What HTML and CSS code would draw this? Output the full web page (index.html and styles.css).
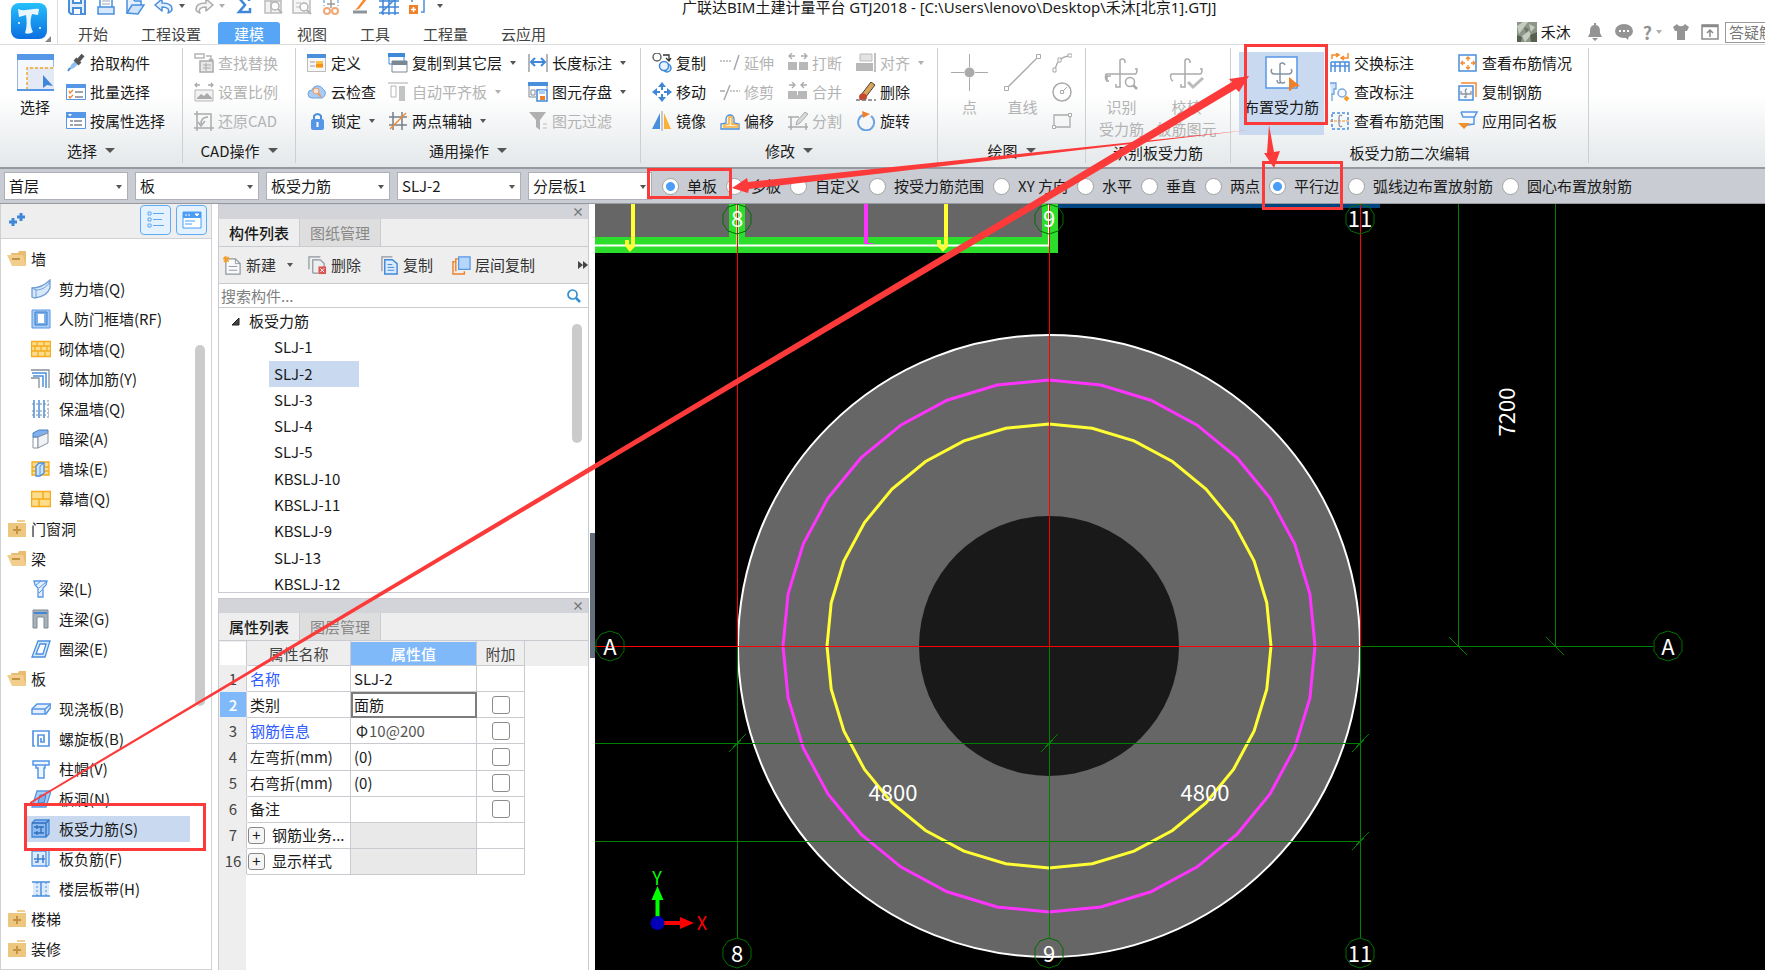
FILE: index.html
```html
<!DOCTYPE html>
<html lang="zh-CN">
<head>
    <meta charset="UTF-8">
    <meta name="viewport" content="width=device-width, initial-scale=1.0">
    <title>广联达BIM土建计量平台 GTJ2018</title>
    <link rel="stylesheet" href="styles.css">
</head>
<body>

<!-- icon sprite -->
<svg class="sprite" aria-hidden="true">
    <!-- quick access -->
    <symbol id="q-save" viewBox="0 0 20 20"><path d="M2 0h16v19H4l-2-2z" fill="#e3effc" stroke="#4a8fdc" stroke-width="2"/><path d="M6 0v8h8V0M6 19v-6h8v6" fill="#fff" stroke="#4a8fdc" stroke-width="2"/></symbol>
    <symbol id="q-new" viewBox="0 0 20 20"><path d="M4 12V1h8l4 4v7" fill="#fff" stroke="#4a8fdc" stroke-width="1.5"/><path d="M6 6h8M6 9h8" stroke="#9aa5b1"/><path d="M2 12h16v7H2z" fill="#d7e8fc" stroke="#4a8fdc" stroke-width="1.5"/></symbol>
    <symbol id="q-open" viewBox="0 0 20 20"><path d="M2 18V4h6l2 2h6v4" fill="#e3effc" stroke="#4a8fdc" stroke-width="1.5"/><path d="M2 18l5-8h12l-6 9z" fill="#cfe3fb" stroke="#4a8fdc" stroke-width="1.5"/></symbol>
    <symbol id="q-undo" viewBox="0 0 20 20"><path d="M1 10l7-6v4c6 0 10 2 10 6 0 2-1 3-4 4 2-4-1-6-6-6v4z" fill="#e3effc" stroke="#4a8fdc" stroke-width="1.5" stroke-linejoin="round"/></symbol>
    <symbol id="q-redo" viewBox="0 0 20 20"><path d="M19 10l-7-6v4C6 8 2 10 2 14c0 2 1 3 4 4-2-4 1-6 6-6v4z" fill="#f4f4f4" stroke="#ababab" stroke-width="1.5" stroke-linejoin="round"/></symbol>
    <symbol id="q-sum" viewBox="0 0 20 20"><path d="M15 6V3H5l6 7-6 7h11v-4" fill="none" stroke="#3f87d9" stroke-width="2.5"/></symbol>
    <symbol id="q-find" viewBox="0 0 20 20"><path d="M2 1h16v17H2zM2 6h16M8 1v17" fill="#f2f2f2" stroke="#bdbdbd" stroke-width="1.5"/><circle cx="12" cy="11" r="4" fill="#fff" stroke="#b3b3b3" stroke-width="1.5"/><path d="M15 14l4 4" stroke="#b3b3b3" stroke-width="2"/></symbol>
    <symbol id="q-view" viewBox="0 0 20 20"><path d="M1 4h17v14H1z" fill="#f6f6f6" stroke="#bdbdbd" stroke-width="1.5"/><path d="M4 8h5M4 12h4" stroke="#bdbdbd"/><circle cx="12" cy="12" r="4" fill="#fff" stroke="#b3b3b3" stroke-width="1.5"/><path d="M15 15l4 4" stroke="#b3b3b3" stroke-width="2"/></symbol>
    <symbol id="q-sheet" viewBox="0 0 20 20"><path d="M3 0v11M17 0v11" stroke="#4a8fdc" stroke-dasharray="3 2"/><path d="M6 9h8M10 5v8" stroke="#9a9a9a" stroke-width="1.5"/><g fill="none" stroke="#f0a878" stroke-width="2"><circle cx="6" cy="16" r="3"/><circle cx="14" cy="16" r="3"/></g></symbol>
    <symbol id="q-pen" viewBox="0 0 20 20"><path d="M7 13L16 1l2 2-9 11-4 1z" fill="#f58a2c"/><path d="M3 17h14" stroke="#8e9499" stroke-width="3"/></symbol>
    <symbol id="q-grid" viewBox="0 0 20 20"><path d="M4 0v20M10 0v20M16 0v20M0 6h20M0 12h20M0 18h20M2 18L18 2" stroke="#3f87d9" stroke-width="1.5"/></symbol>
    <symbol id="q-add" viewBox="0 0 20 20"><path d="M4 7V2h12v15h-3" fill="none" stroke="#4a8fdc" stroke-width="1.5"/><path d="M1 10h9v9H1z" fill="#f0802a"/><path d="M3 14.500h5M5.500 12v5" stroke="#fff" stroke-width="1.500"/></symbol>

    <!-- select group -->
    <symbol id="i-select" viewBox="0 0 37 37"><path d="M.5.5h36v36H.5z" fill="#f5f8fd" stroke="#9db8dc"/><path d="M0 0h37v6H0z" fill="#5596e6"/><path d="M10 13h27v24H10z" fill="#e4eaf5"/><path d="M10 36V14h26" fill="none" stroke="#f5a623" stroke-width="1.500" stroke-dasharray="3 2"/><path d="M26 21v13l4-3 6 1z" fill="#3f87d9"/><path d="M0 36h37" stroke="#5596e6" stroke-width="2"/></symbol>
    <symbol id="i-dropper" viewBox="0 0 20 20"><path d="M3 17l2-5 6-6 3 3-6 6z" fill="#8cc0f2"/><path d="M9 6l5 5M12 8l5-6" stroke="#555" stroke-width="4"/><path d="M2 18l2-3" stroke="#4a8fdc" stroke-width="2"/></symbol>
    <symbol id="i-batch" viewBox="0 0 20 20"><path d="M.5 2.500h19v15H.5z" fill="#fff" stroke="#5596e6"/><path d="M0 2h20v4H0z" fill="#5596e6"/><path d="M3 9l1 2 3-3M3 14l1 2 3-3" fill="none" stroke="#f0802a" stroke-width="1.300"/><path d="M9 10h8M9 15h8" stroke="#7d8791" stroke-width="1.500"/></symbol>
    <symbol id="i-prop" viewBox="0 0 20 20"><path d="M.5 1.500h19v16H.5z" fill="#fff" stroke="#5596e6"/><path d="M0 1h20v6H0z" fill="#5596e6"/><path d="M2 3h4L4 5.500z" fill="#fff"/><path d="M4 10h3M8 10h8M4 14h3M8 14h8" stroke="#7d8791" stroke-width="1.300"/></symbol>

    <!-- cad group -->
    <symbol id="i-replace" viewBox="0 0 20 20"><path d="M1 1h9v4H1zM12 3h5v4M15 6l2 2 2-2" fill="none" stroke="#b5b5b5" stroke-width="1.500"/><path d="M6 8h13v11H6z" fill="#e8e8e8" stroke="#aaa" stroke-width="1.500"/><path d="M9 12h8M9 15h8M12 10v8" stroke="#aaa"/></symbol>
    <symbol id="i-scale" viewBox="0 0 20 20"><path d="M1 3h5M3 1L1 3l2 2M19 3h-5M17 1l2 2-2 2" fill="none" stroke="#aaa" stroke-width="1.300"/><path d="M1 8h18v11H1z" fill="#f3f3f3" stroke="#b5b5b5"/><path d="M3 16l4-4 3 2 3-3 5 5v1H3z" fill="#aaa"/></symbol>
    <symbol id="i-restore" viewBox="0 0 20 20"><path d="M3 0v20M0 3h17v17M0 17h20" fill="none" stroke="#aaa" stroke-width="1.500"/><path d="M7 13c0-5 2-7 7-7M11 10l-4 5-3-4" fill="none" stroke="#aaa" stroke-width="1.500"/></symbol>

    <!-- general group -->
    <symbol id="i-define" viewBox="0 0 20 20"><path d="M.5 1.500h18v17H.5z" fill="#f7f7f7" stroke="#bbb"/><path d="M0 1h19v4H0z" fill="#4a8fdc"/><path d="M3 9h5M3 13h5" stroke="#9a9a9a"/><path d="M9 8h7v7H9z" fill="#fbc04a"/><path d="M9 11h7v3H9z" fill="#f5921e"/></symbol>
    <symbol id="i-cloud" viewBox="0 0 20 20"><path d="M5 16a4 4 0 010-8 6 6 0 0111-1 5 5 0 01-1 9z" fill="#a9cdf5" stroke="#6ba3e2"/><circle cx="9" cy="9" r="3" fill="#fbe3cf" stroke="#e89a62"/><path d="M11 11l3 4" stroke="#e89a62" stroke-width="2"/></symbol>
    <symbol id="i-lock" viewBox="0 0 20 20"><path d="M7 9V5a4 4 0 017 0v4" fill="none" stroke="#4a8fdc" stroke-width="2"/><rect x="4" y="8" width="13" height="11" rx="2" fill="#5596e6"/><path d="M10.500 11v5" stroke="#fff" stroke-width="2"/></symbol>
    <symbol id="i-floors" viewBox="0 0 20 20"><path d="M1 1h15v10H1z" fill="#fff" stroke="#3f87d9"/><path d="M0 0h17v4H0z" fill="#3f87d9"/><path d="M4 8h15v11H4z" fill="#fff" stroke="#7b8794"/><path d="M4 8h15v4H4z" fill="#7b8794"/></symbol>
    <symbol id="i-flush" viewBox="0 0 20 20"><path d="M0 1h20" stroke="#aaa"/><path d="M3 4h5v11H3z" fill="#fff" stroke="#b5b5b5"/><path d="M11 4h6v15h-6z" fill="#c4c4c4"/></symbol>
    <symbol id="i-axis" viewBox="0 0 20 20"><path d="M5 1v18M14 1v18M1 6h18M1 14h18" stroke="#777f87" stroke-width="1.500"/><path d="M2 18L18 2" stroke="#f58a2c" stroke-width="1.500"/></symbol>
    <symbol id="i-length" viewBox="0 0 20 20"><path d="M1 1v18M19 1v18" stroke="#9aa0a6" stroke-width="1.500"/><path d="M3 9h14M7 5L3 9l4 4M13 5l4 4-4 4" fill="none" stroke="#3f87d9" stroke-width="2"/></symbol>
    <symbol id="i-store" viewBox="0 0 20 20"><path d="M1 4v11h7M19 4v3" fill="none" stroke="#7d8791"/><path d="M0 0h20v4H0z" fill="#4a8fdc"/><path d="M3 8h4v5H3z" fill="none" stroke="#7d8791"/><path d="M9 8h10v11H9z" fill="#fff" stroke="#3f87d9" stroke-width="1.500"/><path d="M11 8h6v4h-6z" fill="#a9cdf5"/><path d="M12 14h5v4h-5z" fill="#f0802a"/></symbol>
    <symbol id="i-filter" viewBox="0 0 20 20"><path d="M1 1h17l-6 8v10l-4-3V9z" fill="#b0b0b0"/><path d="M15 13h4M15 17h4" stroke="#bbb"/></symbol>

    <!-- modify group -->
    <symbol id="i-copy" viewBox="0 0 20 20"><circle cx="5" cy="4" r="4" fill="#fff" stroke="#666" stroke-width="1.500"/><path d="M11 2h6v5M14 5l3 3 2-3" fill="none" stroke="#333" stroke-width="1.300"/><circle cx="15" cy="15" r="4" fill="#cfe3fb" stroke="#3f87d9" stroke-width="1.500"/><circle cx="12" cy="13" r="4.500" fill="#e8f2fd" stroke="#3f87d9" stroke-width="1.500"/></symbol>
    <symbol id="i-move" viewBox="0 0 20 20"><path d="M10 0l4 5h-3v3H9V5H6zM10 20l4-5h-3v-3H9v3H6zM0 10l5-4v3h3v2H5v3zM20 10l-5-4v3h-3v2h3v3z" fill="#3f87d9"/></symbol>
    <symbol id="i-mirror" viewBox="0 0 20 20"><path d="M8 2v16H0z" fill="#4a8fdc"/><path d="M12 2v16h7z" fill="#fbb03b"/><path d="M10 0v20" stroke="#9a9a9a"/></symbol>
    <symbol id="i-extend" viewBox="0 0 20 20"><path d="M0 8h12" stroke="#b5b5b5" stroke-width="1.500" stroke-dasharray="2 1"/><path d="M19 2l-5 15" stroke="#aaa" stroke-width="1.500"/></symbol>
    <symbol id="i-trim" viewBox="0 0 20 20"><path d="M0 9h5" stroke="#aaa" stroke-width="1.500"/><path d="M10 9h10" stroke="#b5b5b5" stroke-width="1.500" stroke-dasharray="2 1"/><path d="M10 3L4 18" stroke="#aaa" stroke-width="1.500"/></symbol>
    <symbol id="i-offset" viewBox="0 0 20 20"><path d="M1 18v-5l5-1V8a4 4 0 018 0v4l5 1v5z" fill="#fdf1d6" stroke="#4a8fdc" stroke-width="1.300"/><path d="M4 16v-2l5-1V6h3v7l6 1v2z" fill="none" stroke="#f5b041" stroke-width="1.500"/></symbol>
    <symbol id="i-break" viewBox="0 0 20 20"><path d="M1 3h6M4 0L1 3l3 3M19 3h-6M16 0l3 3-3 3" fill="none" stroke="#aaa" stroke-width="1.300"/><path d="M0 9h9v8H0zM11 9h9v8h-9z" fill="#b8b8b8"/></symbol>
    <symbol id="i-merge" viewBox="0 0 20 20"><path d="M1 3h6M4 0l3 3-3 3M19 3h-6M16 0l-3 3 3 3" fill="none" stroke="#aaa" stroke-width="1.300"/><path d="M0 9h19v8H0z" fill="#b8b8b8"/><path d="M9.500 9v4" stroke="#fff"/></symbol>
    <symbol id="i-split" viewBox="0 0 20 20"><path d="M3 6v13M18 12v7M0 6h11M0 16h20" fill="none" stroke="#aaa" stroke-width="1.500"/><path d="M8 14l1-4 8-9 3 2-8 9z" fill="#d9d9d9" stroke="#aaa"/></symbol>
    <symbol id="i-align" viewBox="0 0 20 20"><path d="M4 1h12v7H4z" fill="#e3e3e3" stroke="#bbb"/><path d="M0 10h17v8H0z" fill="#b8b8b8"/><path d="M19 0v19" stroke="#aaa" stroke-width="1.500"/></symbol>
    <symbol id="i-erase" viewBox="0 0 20 20"><path d="M5 13L15 0l4 3L9 16z" fill="#d9a45b" stroke="#4a3c2c"/><ellipse cx="7" cy="15" rx="4" ry="3.500" fill="#c8452e"/><path d="M0 18h20" stroke="#777" stroke-width="1.500" stroke-dasharray="4 2"/></symbol>
    <symbol id="i-rotate" viewBox="0 0 20 20"><path d="M7 4a8 8 0 108 1" fill="none" stroke="#6ba3e2" stroke-width="2"/><path d="M6 0l8 3-7 4z" fill="#f0802a"/></symbol>

    <!-- draw group -->
    <symbol id="i-point" viewBox="0 0 37 37"><path d="M18.500 0v13M18.500 24v13M0 18.500h13M24 18.500h13" stroke="#aaa"/><circle cx="18.500" cy="18.500" r="5" fill="#aaa"/></symbol>
    <symbol id="i-line" viewBox="0 0 37 37"><path d="M3 34L34 3" stroke="#aaa" stroke-width="1.300"/><path d="M.500 32.500h4v4h-4zM32.500.500h4v4h-4z" fill="#fff" stroke="#aaa"/></symbol>
    <symbol id="i-arc" viewBox="0 0 20 20"><path d="M3 16C5 8 9 4 16 3" fill="none" stroke="#aaa" stroke-width="1.300"/><path d="M1 15h3v4H1zM6 5h3v4H6zM16 1h4v3h-4z" fill="#fff" stroke="#aaa"/></symbol>
    <symbol id="i-circle" viewBox="0 0 20 20"><circle cx="10" cy="10" r="9" fill="none" stroke="#aaa" stroke-width="1.500"/><path d="M11 9l4-4M8.500 8.500h3v3h-3z" fill="none" stroke="#aaa"/></symbol>
    <symbol id="i-rect" viewBox="0 0 20 20"><path d="M2 4h16v12H2z" fill="none" stroke="#aaa" stroke-width="1.300"/><path d="M.500 14.500h3v3h-3zM16.500 2.500h3v3h-3z" fill="#fff" stroke="#aaa"/></symbol>

    <!-- rebar icons -->
    <symbol id="i-identify" viewBox="0 0 37 37"><g fill="none" stroke="#aaa" stroke-width="1.500"><path d="M22 9V7a3 3 0 00-5-1v27h-4v-3M6 27H4v-5h4M3 20h29c2 0 2-2 2-5h-2M3 20c-1 3 0 6 1 7"/><circle cx="27" cy="28" r="4.500"/><path d="M30 31l4 4" stroke-width="2.500"/></g></symbol>
    <symbol id="i-check" viewBox="0 0 37 37"><g fill="none" stroke="#aaa" stroke-width="1.500"><path d="M22 9V7a3 3 0 00-5-1v27h-4v-3M3 20h29c2 0 2-2 2-5h-2M3 20c-1 3 0 6 2 7"/><path d="M20 28l5 5 10-9" stroke="#bbb" stroke-width="3"/></g></symbol>
    <symbol id="i-place" viewBox="0 0 37 37"><path d="M3 3h31v31H3z" fill="#fff" stroke="#5596e6" stroke-width="1.500"/><g fill="none" stroke="#8494a5" stroke-width="1.500"><path d="M22 11a3 3 0 00-5-1v17a3 3 0 005 1M9 15a3 3 0 002 5h15a3 3 0 002-5M14 26c0 3 2 4 4 2"/></g><path d="M26 23l11 9-6 1-5 5z" fill="#f0802a"/></symbol>
    <symbol id="i-swap" viewBox="0 0 20 20"><path d="M2 6V2h6M6 0l3 2-3 2M18 0v5h-6M14 3l-3 2 3 2" fill="none" stroke="#f58a2c" stroke-width="1.500"/><path d="M1 9h18v10M1 9v10M1 13h18M5 9v10M10 9v10M15 9v10" fill="none" stroke="#4a8fdc" stroke-width="1.500"/></symbol>
    <symbol id="i-edit" viewBox="0 0 20 20"><path d="M0 1h6v6H4v5H2v7" fill="#cfe3fb" stroke="#6ba3e2" stroke-width="1.300"/><circle cx="12" cy="11" r="4" fill="#f5f9fe" stroke="#7aa9dc" stroke-width="1.500"/><path d="M15 15l3 3" stroke="#f59a23" stroke-width="4"/></symbol>
    <symbol id="i-range" viewBox="0 0 20 20"><path d="M2 2h16v16H2z" fill="none" stroke="#4a8fdc" stroke-width="1.500" stroke-dasharray="3 2"/><path d="M0 10h20" stroke="#f58a2c" stroke-dasharray="3 1"/><path d="M12 5c-2-2-3 0-3 2v6c0 3 2 3 3 2" fill="none" stroke="#8a949e" stroke-width="1.300"/></symbol>
    <symbol id="i-status" viewBox="0 0 20 20"><path d="M1 2h17v16H1z" fill="#fff" stroke="#4a8fdc" stroke-width="1.500"/><path d="M10 4v4M8 6l2-2 2 2M10 16v-4M8 14l2 2 2-2M3 10h4M5 8l-2 2 2 2M17 10h-4M15 8l2 2-2 2" fill="none" stroke="#f58a2c" stroke-width="1.300"/></symbol>
    <symbol id="i-rebar" viewBox="0 0 20 20"><path d="M3 1h15v14" fill="none" stroke="#f58a2c" stroke-width="1.500"/><path d="M1 4h14v14H1z" fill="#f5f9fe" stroke="#4a8fdc" stroke-width="1.500"/><path d="M9 7c-2 0-2 2-1 4v5M3 9v3h10v-3M6 15h2" fill="none" stroke="#8a949e" stroke-width="1.300"/></symbol>
    <symbol id="i-apply" viewBox="0 0 20 20"><path d="M3 1h16l-3 6v6l-7 1M3 1l2 5h11" fill="#f5f9fe" stroke="#5596e6" stroke-width="1.500"/><path d="M0 12h12l-6 6z" fill="#f0902a"/></symbol>

    <!-- component tree -->
    <symbol id="f-open" viewBox="0 0 20 20"><path d="M4 4l7 0 1-2h7v14H6z" fill="#e9bd6f"/><path d="M0 6h16l3 11H5z" fill="#f1ce8d"/><path d="M5 10h8" stroke="#c39343" stroke-width="2"/></symbol>
    <symbol id="f-shut" viewBox="0 0 20 20"><path d="M10 1h8v2h-8z" fill="#f1ce8d"/><path d="M1 4h18v14H1z" fill="#edc67f"/><path d="M6 11h8M10 7v8" stroke="#c39343" stroke-width="2"/></symbol>
    <symbol id="t-wall" viewBox="0 0 20 20"><path d="M1 9c8 0 13-3 18-8v8c-2 6-8 9-15 10l-3-1z" fill="#d7e8fc" stroke="#6f9fd4" stroke-width="1.300"/><path d="M1 9l4 2v8M5 11c7 0 12-4 14-9" fill="none" stroke="#6f9fd4"/></symbol>
    <symbol id="t-frame" viewBox="0 0 20 20"><path d="M1 1h18v18H1z" fill="#a9cdf5" stroke="#5596e6"/><path d="M4 3h12v13H4z" fill="#7fb1ee" stroke="#3f7fcb"/><path d="M7 5h6v9H7z" fill="#fff"/></symbol>
    <symbol id="t-brick" viewBox="0 0 20 20"><path d="M0 2h20v16H0z" fill="#fddc8c"/><path d="M.500 2.500h19v15H.500zM0 7h20M0 12h20M6 2v5M13 2v5M4 7v5M10 7v5M16 7v5M7 12v6M14 12v6" fill="none" stroke="#f5ab1b" stroke-width="1.300"/></symbol>
    <symbol id="t-brickbar" viewBox="0 0 20 20"><path d="M0 1h18v18M0 9h8v10" fill="none" stroke="#888f96" stroke-width="1.300"/><path d="M1 4h14v15M2 7h10v11" fill="none" stroke="#4a8fdc" stroke-width="1.500"/></symbol>
    <symbol id="t-insul" viewBox="0 0 20 20"><path d="M3 1v18M8 1v18M13 1v18" stroke="#4a8fdc" stroke-width="1.500"/><path d="M17 1v18M1 5h17M1 12h17M1 16h17" stroke="#7b8a99" stroke-dasharray="2 2"/></symbol>
    <symbol id="t-hidden" viewBox="0 0 20 20"><path d="M2 8h5v11H2z" fill="#fff" stroke="#8a949e"/><path d="M2 8V4l6-3h9v3l-10 4z" fill="#7fb1ee" stroke="#4a7fbe"/><path d="M7 8l10-4v10l-10 5z" fill="#f0f3f6" stroke="#8a949e"/></symbol>
    <symbol id="t-pier" viewBox="0 0 20 20"><path d="M1 3h17v13H1zM1 8h17M1 12h17" fill="#fddc8c" stroke="#f5ab1b" stroke-width="1.300"/><path d="M5 7l3-3h5v10l-4 3H5z" fill="#cfe3fb" stroke="#4a8fdc" stroke-width="1.300"/><path d="M9 7v9M9 7l4-3" stroke="#4a8fdc"/></symbol>
    <symbol id="t-curtain" viewBox="0 0 20 20"><path d="M0 2h20v16H0z" fill="#fddc8c"/><path d="M.500 2.500h19v15H.500zM0 10h20M12 2v8M8 10v8" fill="none" stroke="#f5ab1b" stroke-width="1.500"/></symbol>
    <symbol id="t-beam" viewBox="0 0 20 20"><path d="M3 2h13l-1 4-3 3v9H7V9L4 6z" fill="#e3effc" stroke="#5596e6" stroke-width="1.300"/><path d="M5 6l5-4M8 9l7-6M8 14l4-4" stroke="#5596e6"/></symbol>
    <symbol id="t-link" viewBox="0 0 20 20"><path d="M2 1h15v18h-4V8H6v11H2z" fill="#a7b1ba" stroke="#7f8a94"/><path d="M3 4h13" stroke="#3f87d9" stroke-width="2"/></symbol>
    <symbol id="t-ring" viewBox="0 0 20 20"><path d="M7 2h12l-5 16H1zM9 5h6l-3 10H5z" fill="#d7e8fc" fill-rule="evenodd" stroke="#4a8fdc" stroke-width="1.300"/></symbol>
    <symbol id="t-slab" viewBox="0 0 20 20"><path d="M1 10l5-5h14v3l-5 7H1z" fill="#e3effc" stroke="#5596e6" stroke-width="1.500"/><path d="M1 10h13l6-5M14 10v5" fill="none" stroke="#5596e6" stroke-width="1.500"/></symbol>
    <symbol id="t-spiral" viewBox="0 0 20 20"><path d="M4 17H2V2h16v15H7V6h6v7h-3V9" fill="none" stroke="#5596e6" stroke-width="1.700"/></symbol>
    <symbol id="t-cap" viewBox="0 0 20 20"><path d="M2 2h16v4H2zM5 6h9v3h-1v10H7V9H5z" fill="#eef5fd" stroke="#5596e6" stroke-width="1.500"/></symbol>
    <symbol id="t-hole" viewBox="0 0 20 20"><path d="M6 2h14l-5 16H1z" fill="#a9cdf5" stroke="#5596e6" stroke-width="1.300"/><path d="M9 6h6l-2 8H7z" fill="#7fb1ee" stroke="#3f7fcb"/></symbol>
    <symbol id="t-force" viewBox="0 0 20 20"><path d="M1 4l3-3h14v14l-3 3H1z" fill="#8dbaf0" stroke="#3f87d9" stroke-width="1.300"/><path d="M1 4h14v14M15 4l3-3M3 8h10M3 14h10M6 6v4M10 8v6M6 12v4" fill="none" stroke="#2f6fbb" stroke-width="1.300"/></symbol>
    <symbol id="t-neg" viewBox="0 0 20 20"><path d="M1 2h14v15H1zM15 2l3-1v15l-3 2" fill="#dcebfc" stroke="#5596e6" stroke-width="1.300"/><path d="M7 5v8H4M12 6v8M3 10h11" fill="none" stroke="#3f7fcb" stroke-width="1.500"/></symbol>
    <symbol id="t-band" viewBox="0 0 20 20"><path d="M2 3h16v14H2z" fill="#dcebfc"/><path d="M1 3h18M1 17h18M10 3v14" stroke="#4a8fdc" stroke-width="1.500"/><path d="M6 3v14M15 3v14" stroke="#4a8fdc" stroke-dasharray="2 2"/></symbol>

    <!-- list toolbar -->
    <symbol id="l-new" viewBox="0 0 20 20"><path d="M3 3h10l5 5v11H3z" fill="#fafafa" stroke="#8e979f" stroke-width="1.300"/><path d="M13 3v5h5M6 11h9M6 15h9" fill="none" stroke="#8e979f"/><path d="M3 0v7M0 3h7M1 1l5 5M6 1L1 6" stroke="#f59a23" stroke-width="1.500"/></symbol>
    <symbol id="l-del" viewBox="0 0 20 20"><path d="M1 14V1h12M5 18V4h8l4 4v4M5 18h6" fill="none" stroke="#8e979f" stroke-width="1.300"/><path d="M11 11h8v8h-8z" fill="#d9534f"/><path d="M13 13l4 4M17 13l-4 4" stroke="#fff"/></symbol>
    <symbol id="l-copy" viewBox="0 0 20 20"><path d="M2 16V1h11" fill="none" stroke="#8e979f" stroke-width="1.300"/><path d="M5 4h8l5 4v11H5z" fill="#dcebfc" stroke="#3f87d9" stroke-width="1.500"/><path d="M8 9h5M8 12h7M8 15h7" stroke="#3f87d9"/></symbol>
    <symbol id="l-layer" viewBox="0 0 20 20"><path d="M3 6H1v13h12v-3M7 3H4v13" fill="none" stroke="#f0802a" stroke-width="1.500"/><path d="M7 1h12v13H7z" fill="#b5d6fb" stroke="#5596e6" stroke-width="1.300"/></symbol>
</svg>

<div class="app">
    <header class="titlebar">
        <div class="logo">
            <svg viewBox="0 0 36 36" width="36" height="36">
                <defs><linearGradient id="logoFill" x1="0" y1="0" x2="0" y2="1"><stop offset="0" stop-color="#25c0fb"/><stop offset="1" stop-color="#0b6fe0"/></linearGradient></defs>
                <rect width="36" height="36" rx="8" fill="url(#logoFill)"/>
                <path d="M7 6c7 3 14-1 21 0l-1 6-6-1c-2 6-2 12 1 18-3 2-6 2-8 1 2-6 2-12 1-18l-7 2z" fill="#eaf6ff"/>
                <circle cx="29" cy="25" r="1" fill="#fff"/><circle cx="8" cy="20" r="1" fill="#fff"/>
            </svg>
        </div>
        <div class="title-main">
            <div class="title-row">
                <div class="quick">
                    <svg class="icon"><use href="#q-save"/></svg>
                    <svg class="icon"><use href="#q-new"/></svg>
                    <svg class="icon"><use href="#q-open"/></svg>
                    <svg class="icon"><use href="#q-undo"/></svg>
                    <i class="caret"></i>
                    <svg class="icon"><use href="#q-redo"/></svg>
                    <i class="caret dim"></i>
                    <svg class="icon"><use href="#q-sum"/></svg>
                    <svg class="icon"><use href="#q-find"/></svg>
                    <svg class="icon"><use href="#q-view"/></svg>
                    <svg class="icon"><use href="#q-sheet"/></svg>
                    <svg class="icon"><use href="#q-pen"/></svg>
                    <svg class="icon"><use href="#q-grid"/></svg>
                    <svg class="icon"><use href="#q-add"/></svg>
                    <i class="caret more"></i>
                </div>
                <h1 class="title">广联达BIM土建计量平台 GTJ2018 - [C:\Users\lenovo\Desktop\禾沐[北京1].GTJ]</h1>
            </div>
            <div class="tab-row">
                <nav class="tabs">
                    <button>开始</button>
                    <button>工程设置</button>
                    <button class="active">建模</button>
                    <button>视图</button>
                    <button>工具</button>
                    <button>工程量</button>
                    <button>云应用</button>
                </nav>
                <div class="user">
                    <svg width="20" height="20" viewBox="0 0 20 20"><path d="M0 0h20v20H0z" fill="#8d9488"/><path d="M0 4l6-4h5L2 12zM12 2l6 3-4 5zM5 14l7-5 2 4-6 7z" fill="#c5cbbf"/><path d="M0 13l5 2-1 5H0zM13 13l7-3v10h-6z" fill="#55604f"/><path d="M7 5l5 2-3 4z" fill="#6d7668"/></svg>
                    <span class="user-name">禾沐</span>
                    <svg class="u-bell" width="16" height="18" viewBox="0 0 16 18"><path d="M7 0h2v2c4 1 4 4 4 8l2 4H1l2-4c0-4 0-7 4-8zM5 15h6l-3 3z" fill="#949494"/></svg>
                    <svg class="u-chat" width="18" height="16" viewBox="0 0 18 16"><ellipse cx="9" cy="7" rx="9" ry="7" fill="#949494"/><path d="M9 12l5-1-1 5z" fill="#949494"/><path d="M4 7h2M8 7h2M12 7h2" stroke="#fff" stroke-width="2"/></svg>
                    <span class="u-help">?</span><i class="caret dim"></i>
                    <svg class="u-shirt" width="16" height="16" viewBox="0 0 16 16"><path d="M4 0c2 3 6 3 8 0l4 3-2 4h-2v9H4V7H2L0 3z" fill="#949494"/></svg>
                    <svg class="u-box" width="18" height="16" viewBox="0 0 18 16"><path d="M1 1h16v14H1z" fill="#fff" stroke="#8a8a8a" stroke-width="1.500"/><path d="M1 2h16" stroke="#8a8a8a" stroke-width="2.500"/><path d="M9 13V7M6 9l3-3 3 3" fill="none" stroke="#8a8a8a" stroke-width="1.500"/></svg>
                    <input class="ask" type="text" aria-label="答疑解惑" placeholder="答疑解惑">
                </div>
            </div>
        </div>
    </header>

    <section class="ribbon">
        <div class="group g-select">
            <div class="group-body">
                <button class="big"><svg><use href="#i-select"/></svg>选择</button>
                <div class="col">
                    <button><svg class="icon"><use href="#i-dropper"/></svg>拾取构件</button>
                    <button><svg class="icon"><use href="#i-batch"/></svg>批量选择</button>
                    <button><svg class="icon"><use href="#i-prop"/></svg>按属性选择</button>
                </div>
            </div>
            <div class="group-label">选择<i class="caret wide"></i></div>
        </div>
        <div class="group g-cad">
            <div class="group-body">
                <div class="col">
                    <button disabled><svg class="icon"><use href="#i-replace"/></svg>查找替换</button>
                    <button disabled><svg class="icon"><use href="#i-scale"/></svg>设置比例</button>
                    <button disabled><svg class="icon"><use href="#i-restore"/></svg>还原CAD</button>
                </div>
            </div>
            <div class="group-label">CAD操作<i class="caret wide"></i></div>
        </div>
        <div class="group g-general">
            <div class="group-body">
                <div class="col">
                    <button><svg class="icon"><use href="#i-define"/></svg>定义</button>
                    <button><svg class="icon"><use href="#i-cloud"/></svg>云检查</button>
                    <button><svg class="icon"><use href="#i-lock"/></svg>锁定<i class="caret"></i></button>
                </div>
                <div class="col">
                    <button><svg class="icon"><use href="#i-floors"/></svg>复制到其它层<i class="caret"></i></button>
                    <button disabled><svg class="icon"><use href="#i-flush"/></svg>自动平齐板<i class="caret dim"></i></button>
                    <button><svg class="icon"><use href="#i-axis"/></svg>两点辅轴<i class="caret"></i></button>
                </div>
                <div class="col">
                    <button><svg class="icon"><use href="#i-length"/></svg>长度标注<i class="caret"></i></button>
                    <button><svg class="icon"><use href="#i-store"/></svg>图元存盘<i class="caret"></i></button>
                    <button disabled><svg class="icon"><use href="#i-filter"/></svg>图元过滤</button>
                </div>
            </div>
            <div class="group-label">通用操作<i class="caret wide"></i></div>
        </div>
        <div class="group g-modify">
            <div class="group-body">
                <div class="col">
                    <button><svg class="icon"><use href="#i-copy"/></svg>复制</button>
                    <button><svg class="icon"><use href="#i-move"/></svg>移动</button>
                    <button><svg class="icon"><use href="#i-mirror"/></svg>镜像</button>
                </div>
                <div class="col">
                    <button disabled><svg class="icon"><use href="#i-extend"/></svg>延伸</button>
                    <button disabled><svg class="icon"><use href="#i-trim"/></svg>修剪</button>
                    <button><svg class="icon"><use href="#i-offset"/></svg>偏移</button>
                </div>
                <div class="col">
                    <button disabled><svg class="icon"><use href="#i-break"/></svg>打断</button>
                    <button disabled><svg class="icon"><use href="#i-merge"/></svg>合并</button>
                    <button disabled><svg class="icon"><use href="#i-split"/></svg>分割</button>
                </div>
                <div class="col">
                    <button disabled><svg class="icon"><use href="#i-align"/></svg>对齐<i class="caret dim"></i></button>
                    <button><svg class="icon"><use href="#i-erase"/></svg>删除</button>
                    <button><svg class="icon"><use href="#i-rotate"/></svg>旋转</button>
                </div>
            </div>
            <div class="group-label">修改<i class="caret wide"></i></div>
        </div>
        <div class="group g-draw">
            <div class="group-body">
                <button class="big" disabled><svg><use href="#i-point"/></svg>点</button>
                <button class="big" disabled><svg><use href="#i-line"/></svg>直线</button>
                <div class="col">
                    <button disabled aria-label="弧"><svg class="icon"><use href="#i-arc"/></svg></button>
                    <button disabled aria-label="圆"><svg class="icon"><use href="#i-circle"/></svg></button>
                    <button disabled aria-label="矩形"><svg class="icon"><use href="#i-rect"/></svg></button>
                </div>
            </div>
            <div class="group-label">绘图<i class="caret wide"></i></div>
        </div>
        <div class="group g-identify">
            <div class="group-body">
                <button class="big" disabled><svg><use href="#i-identify"/></svg>识别<br>受力筋</button>
                <button class="big" disabled><svg><use href="#i-check"/></svg>校核<br>板筋图元</button>
            </div>
            <div class="group-label low">识别板受力筋</div>
        </div>
        <div class="group g-rebar">
            <div class="group-body">
                <button class="big active"><svg><use href="#i-place"/></svg>布置受力筋</button>
                <div class="col">
                    <button><svg class="icon"><use href="#i-swap"/></svg>交换标注</button>
                    <button><svg class="icon"><use href="#i-edit"/></svg>查改标注</button>
                    <button><svg class="icon"><use href="#i-range"/></svg>查看布筋范围</button>
                </div>
                <div class="col">
                    <button><svg class="icon"><use href="#i-status"/></svg>查看布筋情况</button>
                    <button><svg class="icon"><use href="#i-rebar"/></svg>复制钢筋</button>
                    <button><svg class="icon"><use href="#i-apply"/></svg>应用同名板</button>
                </div>
            </div>
            <div class="group-label low">板受力筋二次编辑</div>
        </div>
    </section>

    <section class="options">
        <div class="combo"><select aria-label="楼层"><option>首层</option></select></div>
        <div class="combo"><select aria-label="构件大类"><option>板</option></select></div>
        <div class="combo"><select aria-label="构件类型"><option>板受力筋</option></select></div>
        <div class="combo"><select aria-label="构件"><option>SLJ-2</option></select></div>
        <div class="combo"><select aria-label="分层"><option>分层板1</option></select></div>
        <div class="radios">
            <label><input type="radio" name="range" checked>单板</label>
            <label><input type="radio" name="range">多板</label>
            <label><input type="radio" name="range">自定义</label>
            <label><input type="radio" name="range">按受力筋范围</label>
            <label><input type="radio" name="dir">XY 方向</label>
            <label><input type="radio" name="dir">水平</label>
            <label><input type="radio" name="dir">垂直</label>
            <label><input type="radio" name="dir">两点</label>
            <label><input type="radio" name="dir" checked>平行边</label>
            <label><input type="radio" name="dir">弧线边布置放射筋</label>
            <label><input type="radio" name="dir">圆心布置放射筋</label>
        </div>
    </section>

    <main class="workspace">
        <aside class="nav">
            <div class="nav-tools">
                <svg width="18" height="16" viewBox="0 0 18 16"><path d="M1 10h8M5 6v8M9 5h8M13 1v8" stroke="#3f87d9" stroke-width="3"/></svg>
                <button aria-label="列表"><svg width="18" height="18" viewBox="0 0 18 18"><path d="M1 1h3v3H1zM1 7h3v3H1zM1 13h3v3H1zM6 2.500h11M6 8.500h9M6 14.500h11" fill="none" stroke="#5fa8f5"/></svg></button>
                <button aria-label="图标"><svg width="20" height="18" viewBox="0 0 20 18"><path d="M1 1h18v16H1z" fill="#fff" stroke="#4a9cf5"/><path d="M1 1h18v6H1z" fill="#4a9cf5"/><path d="M3 4h2M6 4h2M13 3h4l-2 2z" stroke="#fff" fill="#fff"/><path d="M3 10h10M3 13h7" stroke="#4a9cf5"/></svg></button>
            </div>
            <ul class="nav-tree">
                <li class="folder"><svg class="icon"><use href="#f-open"/></svg>墙</li>
                <li><svg class="icon"><use href="#t-wall"/></svg>剪力墙(Q)</li>
                <li><svg class="icon"><use href="#t-frame"/></svg>人防门框墙(RF)</li>
                <li><svg class="icon"><use href="#t-brick"/></svg>砌体墙(Q)</li>
                <li><svg class="icon"><use href="#t-brickbar"/></svg>砌体加筋(Y)</li>
                <li><svg class="icon"><use href="#t-insul"/></svg>保温墙(Q)</li>
                <li><svg class="icon"><use href="#t-hidden"/></svg>暗梁(A)</li>
                <li><svg class="icon"><use href="#t-pier"/></svg>墙垛(E)</li>
                <li><svg class="icon"><use href="#t-curtain"/></svg>幕墙(Q)</li>
                <li class="folder"><svg class="icon"><use href="#f-shut"/></svg>门窗洞</li>
                <li class="folder"><svg class="icon"><use href="#f-open"/></svg>梁</li>
                <li><svg class="icon"><use href="#t-beam"/></svg>梁(L)</li>
                <li><svg class="icon"><use href="#t-link"/></svg>连梁(G)</li>
                <li><svg class="icon"><use href="#t-ring"/></svg>圈梁(E)</li>
                <li class="folder"><svg class="icon"><use href="#f-open"/></svg>板</li>
                <li><svg class="icon"><use href="#t-slab"/></svg>现浇板(B)</li>
                <li><svg class="icon"><use href="#t-spiral"/></svg>螺旋板(B)</li>
                <li><svg class="icon"><use href="#t-cap"/></svg>柱帽(V)</li>
                <li><svg class="icon"><use href="#t-hole"/></svg>板洞(N)</li>
                <li class="selected"><svg class="icon"><use href="#t-force"/></svg>板受力筋(S)</li>
                <li><svg class="icon"><use href="#t-neg"/></svg>板负筋(F)</li>
                <li><svg class="icon"><use href="#t-band"/></svg>楼层板带(H)</li>
                <li class="folder"><svg class="icon"><use href="#f-shut"/></svg>楼梯</li>
                <li class="folder"><svg class="icon"><use href="#f-shut"/></svg>装修</li>
                <li class="folder"><svg class="icon"><use href="#f-shut"/></svg></li>
            </ul>
            <span class="thumb nav-thumb"></span>
        </aside>

        <div class="dock">
            <section class="panel list-panel">
                <div class="panel-head"><button aria-label="关闭">×</button></div>
                <div class="panel-tabs">
                    <button class="active">构件列表</button>
                    <button>图纸管理</button>
                </div>
                <div class="panel-tools">
                    <button><svg class="icon"><use href="#l-new"/></svg>新建<i class="caret"></i></button>
                    <button><svg class="icon"><use href="#l-del"/></svg>删除</button>
                    <button><svg class="icon"><use href="#l-copy"/></svg>复制</button>
                    <button><svg class="icon"><use href="#l-layer"/></svg>层间复制</button>
                    <svg class="overflow" width="10" height="8" viewBox="0 0 10 8"><path d="M0 0l5 4-5 4zM5 0l5 4-5 4z" fill="#444"/></svg>
                </div>
                <div class="search">
                    <input type="text" aria-label="搜索构件" placeholder="搜索构件...">
                    <svg width="14" height="14" viewBox="0 0 14 14"><circle cx="5.500" cy="5.500" r="4.500" fill="none" stroke="#2f8fd0" stroke-width="1.700"/><path d="M9 9l4 4" stroke="#2f8fd0" stroke-width="2.500"/></svg>
                </div>
                <div class="list-box">
                    <ul class="list">
                        <li class="root"><svg width="9" height="9" viewBox="0 0 9 9"><path d="M8 1v7H1z" fill="#444" stroke="#222"/></svg>板受力筋</li>
                        <li><span>SLJ-1</span></li>
                        <li class="selected"><span>SLJ-2</span></li>
                        <li><span>SLJ-3</span></li>
                        <li><span>SLJ-4</span></li>
                        <li><span>SLJ-5</span></li>
                        <li><span>KBSLJ-10</span></li>
                        <li><span>KBSLJ-11</span></li>
                        <li><span>KBSLJ-9</span></li>
                        <li><span>SLJ-13</span></li>
                        <li><span>KBSLJ-12</span></li>
                    </ul>
                    <span class="thumb list-thumb"></span>
                </div>
            </section>

            <section class="panel prop-panel">
                <div class="panel-head"><button aria-label="关闭">×</button></div>
                <div class="panel-tabs">
                    <button class="active">属性列表</button>
                    <button>图层管理</button>
                </div>
                <div class="prop-box">
                    <table class="props">
                        <thead>
                            <tr><th class="corner"></th><th>属性名称</th><th class="hot">属性值</th><th>附加</th></tr>
                        </thead>
                        <tbody>
                            <tr><th>1</th><td class="link">名称</td><td>SLJ-2</td><td></td></tr>
                            <tr class="current"><th>2</th><td>类别</td><td class="cell">面筋</td><td class="tick"><input type="checkbox" aria-label="类别"></td></tr>
                            <tr><th>3</th><td class="link">钢筋信息</td><td class="rebar"><span class="phi">Φ</span>10@200</td><td class="tick"><input type="checkbox" aria-label="钢筋信息"></td></tr>
                            <tr><th>4</th><td>左弯折(mm)</td><td>(0)</td><td class="tick"><input type="checkbox" aria-label="左弯折"></td></tr>
                            <tr><th>5</th><td>右弯折(mm)</td><td>(0)</td><td class="tick"><input type="checkbox" aria-label="右弯折"></td></tr>
                            <tr><th>6</th><td>备注</td><td></td><td class="tick"><input type="checkbox" aria-label="备注"></td></tr>
                            <tr><th>7</th><td class="expand"><button>+</button>钢筋业务...</td><td class="off"></td><td></td></tr>
                            <tr><th>16</th><td class="expand"><button>+</button>显示样式</td><td class="off"></td><td></td></tr>
                        </tbody>
                    </table>
                </div>
            </section>
            <span class="splitter"></span>
        </div>

        <!-- drawing area -->
        <svg class="canvas" viewBox="595 204 1170 766" preserveAspectRatio="xMinYMin slice">
            <defs>
                <!-- 32-sided ring, radius 1000 -->
                <polygon id="ring" vector-effect="non-scaling-stroke" points="1000,0 981,195 924,383 831,556 707,707 556,831 383,924 195,981 0,1000 -195,981 -383,924 -556,831 -707,707 -831,556 -924,383 -981,195 -1000,0 -981,-195 -924,-383 -831,-556 -707,-707 -556,-831 -383,-924 -195,-981 0,-1000 195,-981 383,-924 556,-831 707,-707 831,-556 924,-383 981,-195"/>
                <polygon id="bubble" points="0,-15 9,-12 14,-5 14,5 9,12 0,15 -9,12 -14,5 -14,-5 -9,-12"/>
            </defs>
            <rect x="595" y="204" width="1170" height="766" fill="#000"/>
            <rect x="1057" y="204" width="323" height="4" fill="#00457f"/>

            <rect x="595" y="204" width="450" height="40" fill="#666"/>
            <path d="M595 237h134v-33h16v33h297v-33h16v49H595z" fill="#2bde2b"/>
            <path d="M595 245.500h454M737.500 204v41M1049 204v42" stroke="#fff" stroke-width="2" fill="none"/>
            <g fill="none" stroke-width="4">
                <path d="M633 204v42l-3 3-3-4v-5M946 204v42l-3 3-4-4v-5" stroke="#ffff33"/>
                <path d="M866 204v40" stroke="#ff33ff"/>
                <path d="M864 243.500h9" stroke="#ff33ff" stroke-width="1"/>
            </g>

            <circle cx="1049" cy="646" r="311" fill="#666" stroke="#fff" stroke-width="2"/>
            <circle cx="1049" cy="646" r="130" fill="#191919"/>
            <g fill="none" stroke-width="3">
                <use href="#ring" transform="translate(1049 646) scale(.266)" stroke="#ff33ff"/>
                <use href="#ring" transform="translate(1049 646) scale(.222)" stroke="#ffff33"/>
            </g>

            <g class="axes" stroke="#008000">
                <path d="M737.500 646v292M1049.500 646v292M1360.500 646v292M595 743.500h766M595 841.500h766M1360 646.500h293M1458.500 204v442M1555.500 204v442"/>
                <path d="M729 752l17-18M1041 752l17-18M1352 752l17-18M1352 850l17-18M1449 637l18 18M1546 637l18 18"/>
            </g>
            <path class="axes" d="M737.500 204v442M1049.500 204v442M1360.500 204v442M595 646.500h766" stroke="#f00"/>

            <g class="bubbles">
                <use href="#bubble" x="737" y="219"/><use href="#bubble" x="1049" y="219"/><use href="#bubble" x="1360" y="219"/>
                <use href="#bubble" x="737" y="953"/><use href="#bubble" x="1049" y="953"/><use href="#bubble" x="1360" y="953"/>
                <use href="#bubble" x="610" y="646"/><use href="#bubble" x="1668" y="646"/>
            </g>
            <g class="marks">
                <text x="737" y="227">8</text>
                <text x="1049" y="227">9</text>
                <text x="1360" y="227">11</text>
                <text x="737" y="962">8</text>
                <text x="1049" y="962">9</text>
                <text x="1360" y="962">11</text>
                <text x="610" y="655">A</text>
                <text x="1668" y="655">A</text>
                <text x="893" y="801">4800</text>
                <text x="1205" y="801">4800</text>
                <text transform="translate(1515 412) rotate(-90)">7200</text>
            </g>

            <path d="M657.500 923v-26" stroke="#0f0" stroke-width="4"/>
            <path d="M657.500 886l6 14h-12z" fill="#0f0"/>
            <path d="M657 923h26" stroke="#f00" stroke-width="4"/>
            <path d="M694 923l-14 6v-12z" fill="#f00"/>
            <circle cx="657.500" cy="923" r="7" fill="#0000b8"/>
            <text class="ucs" x="657" y="885" fill="#0f0">Y</text>
            <text class="ucs" x="702" y="930" fill="#f00">X</text>
        </svg>
    </main>

    <!-- tutorial callouts -->
    <svg class="callouts" viewBox="0 0 1765 970" width="1765" height="970">
        <g fill="none" stroke="#fc3a3a" stroke-width="3">
            <rect x="648.500" y="169.500" width="82" height="28"/>
            <rect x="1245.500" y="45.500" width="81" height="78"/>
            <rect x="1263.500" y="162.500" width="78" height="46"/>
            <rect x="25.500" y="804.500" width="179" height="45"/>
        </g>
        <g fill="#fc3a3a">
            <path d="M30 802L1232 82 1229 79 1249 76 1239 92 1236 89 30 804z"/>
            <path d="M1249 130L748 182 747 178 732 188 748 193 749 189z"/>
            <path d="M1269 125L1267 153 1264 153 1274 168 1280 151 1274 152z"/>
        </g>
    </svg>
</div>

</body>
</html>
```

FILE: styles.css
```css
* {
    box-sizing: border-box;
}
body {
    margin: 0;
    overflow: hidden;
    background: #fff;
    color: #1a1a1a;
    font-family: "Noto Sans CJK SC", "Microsoft YaHei", sans-serif;
    font-size: 15px;
    line-height: 22px;
}
button, input, select {
    margin: 0;
    padding: 0;
    border: 0;
    background: none;
    color: inherit;
    font: inherit;
}
ul {
    margin: 0;
    padding: 0;
    list-style: none;
}
svg {
    display: block;
    flex: none;
}
.sprite {
    position: absolute;
    width: 0;
    height: 0;
}
.icon {
    width: 20px;
    height: 20px;
}
.caret {
    flex: none;
    width: 0;
    height: 0;
    border: 3px solid transparent;
    border-top: 4px solid #555;
    border-bottom: 0;
}
.caret.dim {
    border-top-color: #b0b0b0;
}
.caret.wide {
    border-width: 5px 5px 0;
}
.app {
    position: relative;
    display: flex;
    flex-direction: column;
    height: 100vh;
}

/* title bar */
.titlebar {
    display: flex;
    flex: none;
    height: 45px;
    overflow: hidden;
    border-bottom: 1px solid #dcdcdc;
}
.logo {
    position: relative;
    width: 58px;
    padding: 3px 11px;
    border-right: 1px solid #ddd;
}
.logo::after {
    content: "";
    position: absolute;
    right: 6px;
    bottom: 2px;
    border: 3px solid #888;
    border-top-color: transparent;
    border-left-color: transparent;
}
.title-main {
    flex: 1;
    min-width: 0;
    padding-left: 4px;
}
.title-row {
    display: flex;
    height: 15px;
}
.quick {
    display: flex;
    align-items: flex-end;
    gap: 9px;
    padding-left: 5px;
}
.quick .caret {
    margin: 0 0 7px -4px;
}
.quick .more {
    margin-left: 0;
}
.title {
    margin: 0 0 0 239px;
    font-family: "Noto Sans", "Noto Sans CJK SC", sans-serif;
    font-size: 15px;
    font-weight: 400;
    line-height: 14px;
    white-space: nowrap;
}
.tab-row {
    display: flex;
    justify-content: space-between;
    height: 30px;
    padding-top: 7px;
}
.tabs {
    display: flex;
    gap: 1px;
}
.tabs button {
    height: 23px;
    padding: 0 16px;
    color: #444;
    line-height: 20px;
}
.tabs .active {
    border-radius: 3px 3px 0 0;
    background: #56a5f7;
    color: #fff;
}
.user {
    display: flex;
    align-items: center;
    height: 20px;
    margin-right: -24px;
}
.user-name {
    margin: 0 16px 0 4px;
}
.u-chat {
    margin: 0 10px 0 12px;
}
.u-help {
    margin-right: 4px;
    color: #949494;
    font-size: 18px;
    font-weight: 700;
}
.u-shirt {
    margin: 0 12px 0 11px;
}
.ask {
    width: 64px;
    height: 21px;
    margin-left: 6px;
    padding-left: 3px;
    border: 1px solid #999;
}
.ask::placeholder {
    color: #777;
}

/* ribbon */
.ribbon {
    display: flex;
    flex: none;
    height: 122px;
    padding: 3px 0 4px;
    background: linear-gradient(#fff 40%, #e4e8ea);
}
.ribbon button {
    display: flex;
    align-items: center;
    gap: 4px;
    height: 29px;
    white-space: nowrap;
}
.ribbon button:disabled {
    color: #b3b3b3;
}
.ribbon button .caret {
    margin-left: 4px;
}
.group {
    border-right: 1px solid #cdcfd2;
}
.group-body {
    display: flex;
    height: 88px;
}
.group-label {
    display: flex;
    align-items: center;
    justify-content: center;
    gap: 8px;
    height: 29px;
}
.group-label.low {
    padding-top: 5px;
}
.ribbon .big {
    flex-direction: column;
    gap: 5px;
    height: 83px;
    margin-top: 4px;
    padding-top: 2px;
}
.big svg {
    width: 37px;
    height: 37px;
}
.big.active {
    background: #c9d9f0;
}
.g-select {
    width: 183px;
}
.g-select .group-body {
    padding-left: 4px;
}
.g-select .big {
    width: 62px;
}
.g-cad {
    width: 113px;
}
.g-cad .group-body {
    padding-left: 11px;
}
.g-general {
    width: 345px;
}
.g-general .group-body {
    gap: 12px;
    padding-left: 11px;
}
.g-modify {
    width: 297px;
}
.g-modify .group-body {
    gap: 14px;
    padding-left: 11px;
}
.g-modify .col:last-child {
    width: 72px;
}
.g-draw {
    width: 148px;
}
.g-draw .group-body {
    padding-left: 5px;
}
.g-draw .big {
    width: 53px;
}
.g-draw .col {
    padding-left: 3px;
}
.g-identify {
    width: 145px;
}
.g-identify .group-body {
    padding-left: 3px;
}
.g-identify .big {
    width: 65px;
}
.g-rebar {
    width: 358px;
}
.g-rebar .group-body {
    padding-left: 8px;
}
.g-rebar .big {
    width: 85px;
    margin-right: 6px;
}
.g-rebar .col + .col {
    padding-left: 14px;
}

/* option bar */
.options {
    display: flex;
    flex: none;
    align-items: center;
    gap: 7px;
    height: 37px;
    padding-left: 4px;
    border-top: 2px solid #96999f;
    border-bottom: 1px solid #96999f;
    background: #c9ccd2;
}
.combo {
    position: relative;
    flex: none;
    width: 124px;
    height: 28px;
    border: 1px solid #adb0b6;
    background: #fff;
}
.combo::after {
    content: "";
    position: absolute;
    top: 12px;
    right: 5px;
    border: 3px solid transparent;
    border-top: 4px solid #555;
    border-bottom: 0;
}
.combo select {
    width: 100%;
    height: 26px;
    padding-left: 4px;
    appearance: none;
}
.radios {
    display: flex;
    gap: 9px;
    padding-left: 3px;
}
.radios label {
    display: flex;
    align-items: center;
    gap: 8px;
    white-space: nowrap;
}
.radios input {
    width: 17px;
    height: 17px;
    border: 1px solid #a3a3a3;
    border-radius: 50%;
    background: #fff;
    appearance: none;
}
.radios input:checked {
    background: radial-gradient(circle, #4a9ef7 4px, #fff 5px);
}

/* workspace */
.workspace {
    display: grid;
    flex: 1;
    grid-template-columns: 212px 371px 1fr;
    gap: 6px;
    min-height: 0;
}
.thumb {
    position: absolute;
    width: 10px;
    border-radius: 5px;
    background: #cbcbcb;
}

/* component tree */
.nav {
    position: relative;
    min-height: 0;
    overflow: hidden;
    border: 1px solid #cfd1d5;
    border-top: 0;
}
.nav-tools {
    display: flex;
    align-items: center;
    gap: 5px;
    height: 35px;
    padding: 0 4px 3px 7px;
    border-bottom: 1px solid #cfd1d5;
    background: #eee;
}
.nav-tools > svg {
    margin-right: auto;
}
.nav-tools button {
    display: flex;
    align-items: center;
    justify-content: center;
    width: 31px;
    height: 30px;
    border: 1px solid #5fabf7;
    border-radius: 4px;
    background: #e4f1fe;
}
.nav-tree {
    padding-top: 5px;
}
.nav-tree li {
    display: flex;
    align-items: center;
    gap: 8px;
    height: 26px;
    margin: 2px 21px 4px 26px;
    padding-left: 4px;
}
.nav-tree .folder {
    gap: 4px;
    margin-left: 6px;
    padding-left: 0;
}
.nav-tree .selected {
    background: #c9d9f0;
}
.nav-thumb {
    top: 141px;
    right: 6px;
    height: 361px;
}

/* docked panels */
.dock {
    position: relative;
    display: flex;
    flex-direction: column;
    gap: 5px;
    min-height: 0;
}
.panel {
    border: 1px solid #c9cbd0;
}
.panel-head {
    height: 14px;
    background: #d2d4da;
}
.panel-head button {
    display: block;
    width: 20px;
    height: 14px;
    margin-left: auto;
    color: #777;
    font-size: 12px;
    font-weight: 700;
    line-height: 14px;
}
.panel-tabs {
    display: flex;
    height: 28px;
    border-bottom: 1px solid #c9cbd0;
    background: #eee;
}
.panel-tabs button {
    width: 81px;
    border-right: 1px solid #c9cbd0;
    background: #dedede;
    color: #888;
}
.panel-tabs .active {
    background: #eee;
    color: #1a1a1a;
    font-weight: 500;
}
.panel-tools {
    display: flex;
    align-items: center;
    gap: 19px;
    height: 37px;
    padding-left: 4px;
    border-bottom: 1px solid #c9cbd0;
    background: #eee;
}
.panel-tools button {
    display: flex;
    align-items: center;
    gap: 4px;
    color: #333;
}
.panel-tools button:first-child {
    margin-right: -4px;
}
.panel-tools .icon {
    width: 19px;
    height: 19px;
}
.panel-tools button .caret {
    margin: 0 0 0 7px;
}
.overflow {
    margin-left: auto;
}
.search {
    display: flex;
    align-items: center;
    height: 24px;
    padding: 0 7px 0 2px;
    border-bottom: 1px solid #c9cbd0;
}
.search input {
    flex: 1;
    outline: 0;
}
.search input::placeholder {
    color: #808080;
}
.list-panel {
    height: 389px;
}
.list-box {
    position: relative;
    height: 283px;
    overflow: hidden;
}
.list {
    display: flex;
    flex-direction: column;
    height: 289px;
}
.list li {
    display: flex;
    flex: 1;
    align-items: center;
    padding-left: 50px;
}
.list .root {
    gap: 9px;
    padding-left: 12px;
}
.list span {
    width: 90px;
    padding: 2px 5px;
}
.list .selected span {
    background: #c9d9f0;
}
.list-thumb {
    top: 16px;
    right: 6px;
    height: 119px;
}
.splitter {
    position: absolute;
    top: 329px;
    right: -6px;
    width: 5px;
    height: 125px;
    background: #636f7c;
}

/* properties */
.prop-panel {
    flex: 1;
    min-height: 0;
}
.prop-box {
    height: 100%;
    background: linear-gradient(#eee 25px, transparent 25px), linear-gradient(90deg, #eee 27px, #fff 27px);
}
.props {
    width: 306px;
    height: 234px;
    border-collapse: collapse;
    table-layout: fixed;
    background: #fff;
}
.props th, .props td {
    padding: 0 3px;
    border: 1px solid #c9cbd0;
    text-align: left;
    white-space: nowrap;
}
.props th {
    padding: 0;
    border-color: #eee #c9cbd0 #c9cbd0 #eee;
    background: #eee;
    color: #444;
    font-weight: 400;
    text-align: center;
}
.props th:first-child {
    width: 27px;
    border-color: #eee #c9cbd0 #eee #eee;
}
.props thead th {
    height: 24px;
}
.props th:nth-child(2) {
    width: 104px;
}
.props th:nth-child(3) {
    width: 126px;
}
.props .corner {
    background: #fff;
}
.props .hot,
.props .current th {
    background: #80b9fa;
    color: #fff;
    font-weight: 500;
}
.props .link {
    color: #2d5bff;
}
.props .cell {
    outline: 2px solid #7d7d7d;
    outline-offset: -2px;
}
.props .rebar {
    padding-left: 5px;
    color: #555;
}
.phi {
    margin-right: 1px;
    color: #222;
}
.props .off {
    background: #e9e9e9;
}
.props .tick {
    padding: 0;
    text-align: center;
}
.tick input {
    display: block;
    width: 18px;
    height: 18px;
    margin: 0 auto;
    border: 1px solid #8c8c8c;
    border-radius: 3px;
    background: #fff;
    appearance: none;
}
.props .expand {
    padding-left: 1px;
}
.expand button {
    width: 17px;
    height: 17px;
    margin-right: 7px;
    border: 1px solid #888;
    border-radius: 3px;
    background: #f5f5f5;
    line-height: 14px;
}

/* drawing area */
.canvas {
    width: 100%;
    height: 100%;
}
.axes {
    fill: none;
    shape-rendering: crispEdges;
}
.bubbles {
    fill: none;
    stroke: #006e00;
}
.marks {
    fill: #fff;
    font-size: 22px;
    text-anchor: middle;
}
.ucs {
    font-size: 18px;
    text-anchor: middle;
}
.callouts {
    position: absolute;
    top: 0;
    left: 0;
    pointer-events: none;
}
```
